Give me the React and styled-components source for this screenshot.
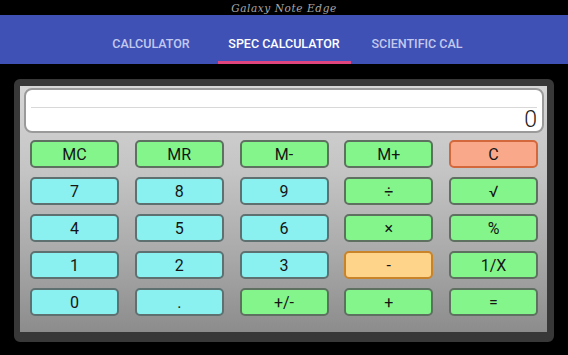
import React from 'react'
import styled, { createGlobalStyle } from 'styled-components'

const GlobalStyle = createGlobalStyle`
  html, body {
    margin: 0;
    padding: 0;
    background: #000;
  }
  body {
    width: 568px;
    height: 355px;
    overflow: hidden;
    font-family: Roboto, "Liberation Sans", sans-serif;
  }
`

const Screen = styled.div`
  width: 568px;
  height: 355px;
  background: #000;
  display: flex;
  flex-direction: column;
`

const StatusBar = styled.div`
  height: 15px;
  display: flex;
  align-items: center;
  justify-content: center;
  color: #a8a8a8;
  font-family: "DejaVu Serif", serif;
  font-style: italic;
  font-size: 10.5px;
  letter-spacing: 0.6px;
`

const TabBar = styled.div`
  height: 49px;
  background: #3f51b5;
  display: flex;
  justify-content: center;
`

const Tab = styled.div`
  width: 133px;
  display: flex;
  align-items: center;
  justify-content: center;
  box-sizing: border-box;
  padding-top: 10px;
  font-size: 12.5px;
  font-weight: 500;
  color: ${props => (props.active ? '#ffffff' : '#c3c9ee')};
  border-bottom: 3px solid ${props => (props.active ? '#e0457e' : 'transparent')};
`

const Stage = styled.div`
  padding: 15px 0 0 14px;
`

const Frame = styled.div`
  width: 540px;
  height: 263px;
  box-sizing: border-box;
  border-style: solid;
  border-color: #383838;
  border-width: 7px 7px 10px 6px;
  border-radius: 6px;
  background: linear-gradient(180deg, #d6d6d6 0%, #c4c4c4 35%, #a8a8a8 70%, #8c8c8c 100%);
  display: flex;
  flex-direction: column;
`

const Display = styled.div`
  margin: 2px 3px 0 4px;
  height: 45px;
  box-sizing: border-box;
  background: #fff;
  border: 2px solid #9a9a9a;
  border-radius: 8px;
  display: flex;
  flex-direction: column;
  padding: 0 5px 0 5px;
`

const Rule = styled.div`
  margin-top: 17px;
  height: 1px;
  background: #d8d8d8;
`

const Value = styled.div`
  text-align: right;
  font-size: 23px;
  font-weight: 300;
  line-height: 22px;
  color: #222;
  margin-top: 1px;
`

const Keys = styled.div`
  margin: 7px 9px 0 10px;
  display: grid;
  grid-template-columns: repeat(5, 89px);
  grid-auto-rows: 28px;
  column-gap: 15.75px;
  row-gap: 9px;
`

const palette = {
  green: { bg: '#84f58b', border: '#5e7160' },
  cyan: { bg: '#8af0f0', border: '#5e7170' },
  red: { bg: '#f9a98a', border: '#d3683d' },
  orange: { bg: '#fdd48a', border: '#c98329' },
}

const Key = styled.button`
  box-sizing: border-box;
  margin: 0;
  padding: 0;
  background: ${props => palette[props.tone].bg};
  border: 2px solid ${props => palette[props.tone].border};
  border-radius: 5px;
  font-family: Roboto, "Liberation Sans", sans-serif;
  font-size: 16px;
  color: #151515;
  display: flex;
  align-items: center;
  justify-content: center;
`

const keys = [
  ['MC', 'green'],
  ['MR', 'green'],
  ['M-', 'green'],
  ['M+', 'green'],
  ['C', 'red'],
  ['7', 'cyan'],
  ['8', 'cyan'],
  ['9', 'cyan'],
  ['÷', 'green'],
  ['√', 'green'],
  ['4', 'cyan'],
  ['5', 'cyan'],
  ['6', 'cyan'],
  ['×', 'green'],
  ['%', 'green'],
  ['1', 'cyan'],
  ['2', 'cyan'],
  ['3', 'cyan'],
  ['-', 'orange'],
  ['1/X', 'green'],
  ['0', 'cyan'],
  ['.', 'cyan'],
  ['+/-', 'green'],
  ['+', 'green'],
  ['=', 'green'],
]

const App = () => (
  <Screen>
    <GlobalStyle />
    <StatusBar>Galaxy Note Edge</StatusBar>
    <TabBar>
      <Tab>CALCULATOR</Tab>
      <Tab active>SPEC CALCULATOR</Tab>
      <Tab>SCIENTIFIC CAL</Tab>
    </TabBar>
    <Stage>
      <Frame>
        <Display>
          <Rule />
          <Value>0</Value>
        </Display>
        <Keys>
          {keys.map(([label, tone]) => (
            <Key key={label} tone={tone}>
              {label}
            </Key>
          ))}
        </Keys>
      </Frame>
    </Stage>
  </Screen>
)

export default App
